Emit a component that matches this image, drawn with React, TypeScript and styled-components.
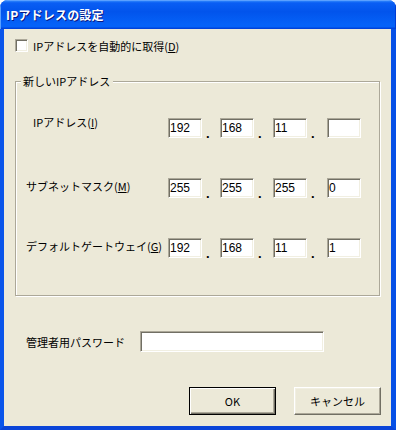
import React from "react";
import styled, { createGlobalStyle, css } from "styled-components";

const GlobalStyle = createGlobalStyle`
  html, body { margin: 0; padding: 0; background: #ffffff; }
  body {
    font-family: "Noto Sans CJK JP", "Liberation Sans", sans-serif;
    font-size: 11px;
    color: #000;
  }
`;

const Window = styled.div`
  width: 396px;
  height: 430px;
  display: flex;
  flex-direction: column;
  border-radius: 8px 8px 0 0;
  overflow: hidden;
  background: #0a4fe4;
`;

const TitleBar = styled.div`
  height: 29px;
  flex: none;
  display: flex;
  align-items: center;
  padding-left: 6px;
  background: linear-gradient(
    180deg,
    #3d95ff 0%,
    #0a5ef4 10%,
    #0254ec 40%,
    #0562f8 85%,
    #0562f8 92%,
    #0048e0 97%,
    #003cd4 100%
  );
  box-shadow: inset 1px 1px 0 #5aa0ff, inset -1px 0 0 #003cd4;
  color: #fff;
  font-weight: bold;
  font-size: 12px;
  text-shadow: 1px 1px 0 #0a1883;
  letter-spacing: 0.2px;
`;

const Frame = styled.div`
  flex: 1;
  display: flex;
  flex-direction: column;
  background: #ece9d8;
  border-left: 4px solid #0a55ea;
  border-right: 5px solid #0650e6;
  border-bottom: 4px solid #0a44d8;
  box-shadow: 1px 0 0 #0a3ed0, -1px 0 0 #0a3ed0;
`;

const CheckRow = styled.label`
  display: flex;
  align-items: center;
  gap: 5px;
  margin: 10px 0 0 11px;
  height: 13px;
`;

const sunken = css`
  box-sizing: border-box;
  background: #fff;
  border: 1px solid;
  border-color: #aca899 #fff #fff #aca899;
  box-shadow: inset 1px 1px 0 #716f64, inset -1px -1px 0 #f1efe2;
`;

const CheckBox = styled.span`
  ${sunken};
  width: 13px;
  height: 13px;
  flex: none;
`;

const GroupBox = styled.div`
  position: relative;
  box-sizing: border-box;
  margin: 29px 0 0 11px;
  width: 365px;
  height: 215px;
  border: 1px solid #aca899;
  box-shadow: inset 1px 1px 0 #fff, 1px 1px 0 #fff;
  display: flex;
  flex-direction: column;
  gap: 40px;
  padding-top: 36px;
`;

const GroupLabel = styled.span`
  position: absolute;
  top: -8px;
  left: 5px;
  padding: 0 3px 0 2px;
  background: #ece9d8;
  line-height: 14px;
`;

const Row = styled.div<{ $indent: number }>`
  display: flex;
  align-items: flex-start;
  height: 20px;
  padding-left: ${(p) => p.$indent}px;
`;

const RowLabel = styled.span<{ $indent: number; $offset: number }>`
  width: ${(p) => 152 - p.$indent}px;
  flex: none;
  line-height: 14px;
  margin-top: ${(p) => p.$offset}px;
  white-space: nowrap;
`;

const Octet = styled.div`
  ${sunken};
  width: 34px;
  height: 20px;
  flex: none;
  padding-left: 1px;
  font-family: "Liberation Sans", Arial, sans-serif;
  font-size: 12px;
  line-height: 18px;
  overflow: hidden;
`;

const Dot = styled.span<{ $w: number }>`
  width: ${(p) => p.$w}px;
  height: 20px;
  flex: none;
  display: flex;
  align-items: flex-end;
  padding-left: 4px;
  box-sizing: border-box;
  font-family: "Liberation Sans", Arial, sans-serif;
  font-weight: bold;
  font-size: 13px;
  line-height: 1;
  & > span {
    margin-bottom: -2px;
  }
`;

const PasswordRow = styled.div`
  display: flex;
  align-items: center;
  margin: 35px 0 0 22px;
`;

const PasswordLabel = styled.span`
  width: 114px;
  flex: none;
  line-height: 14px;
`;

const PasswordField = styled.div`
  ${sunken};
  width: 184px;
  height: 21px;
`;

const ButtonRow = styled.div`
  margin-top: auto;
  display: flex;
  justify-content: flex-end;
  gap: 18px;
  padding: 0 10px 11px 0;
`;

const Button = styled.button<{ $default?: boolean }>`
  width: 87px;
  height: 28px;
  box-sizing: border-box;
  padding: 0;
  background: #ece9d8;
  font-family: "Noto Sans CJK JP", "Liberation Sans", sans-serif;
  font-size: 11px;
  color: #000;
  border: 1px solid;
  border-color: #fff #716f64 #716f64 #fff;
  box-shadow: inset -1px -1px 0 #aca899, inset 1px 1px 0 #f1efe2;
  ${(p) =>
    p.$default &&
    css`
      border-color: #000;
      box-shadow: inset 1px 1px 0 #fff, inset -1px -1px 0 #716f64,
        inset -2px -2px 0 #aca899;
    `}
`;

const rows = [
  { label: "IPアドレス", key: "I", indent: 17, offset: -3, values: ["192", "168", "11", ""] },
  { label: "サブネットマスク", key: "M", indent: 10, offset: 1, values: ["255", "255", "255", "0"] },
  { label: "デフォルトゲートウェイ", key: "G", indent: 10, offset: 1, values: ["192", "168", "11", "1"] },
];

const dotWidths = [18, 19, 20];

export default function App() {
  return (
    <>
      <GlobalStyle />
      <Window>
        <TitleBar>IPアドレスの設定</TitleBar>
        <Frame>
          <CheckRow>
            <CheckBox />
            <span>
              IPアドレスを自動的に取得(<u>D</u>)
            </span>
          </CheckRow>
          <GroupBox>
            <GroupLabel>新しいIPアドレス</GroupLabel>
            {rows.map((r) => (
              <Row key={r.key} $indent={r.indent}>
                <RowLabel $indent={r.indent} $offset={r.offset}>
                  {r.label}(<u>{r.key}</u>)
                </RowLabel>
                {r.values.map((v, i) => (
                  <React.Fragment key={i}>
                    <Octet>{v}</Octet>
                    {i < 3 && (
                      <Dot $w={dotWidths[i]}>
                        <span>.</span>
                      </Dot>
                    )}
                  </React.Fragment>
                ))}
              </Row>
            ))}
          </GroupBox>
          <PasswordRow>
            <PasswordLabel>管理者用パスワード</PasswordLabel>
            <PasswordField />
          </PasswordRow>
          <ButtonRow>
            <Button $default>OK</Button>
            <Button>キャンセル</Button>
          </ButtonRow>
        </Frame>
      </Window>
    </>
  );
}
